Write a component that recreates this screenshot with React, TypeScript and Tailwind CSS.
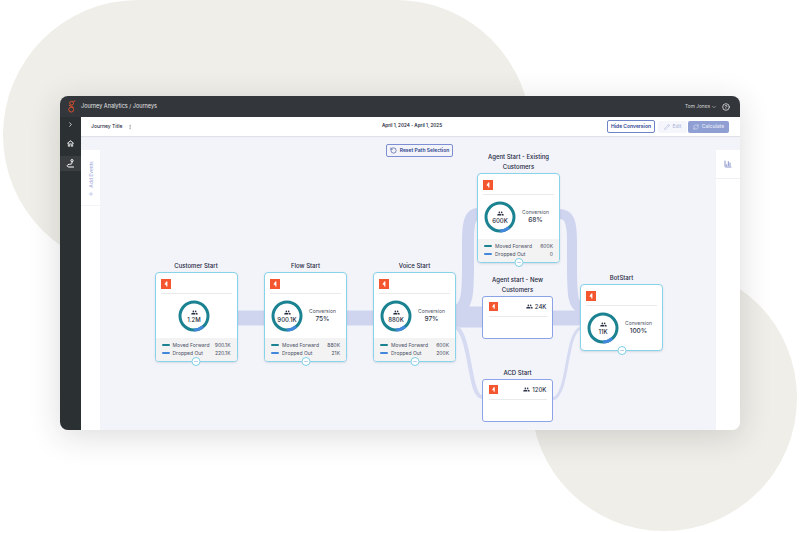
import type { ReactNode } from "react";
import {
  ChartColumn,
  ChevronDown,
  ChevronRight,
  CircleHelp,
  EllipsisVertical,
  Minus,
  Pencil,
  Plus,
  RefreshCw,
  RotateCcw,
} from "lucide-react";
import { MdOutlineHome, MdPeople } from "react-icons/md";

function Logo() {
  return (
    <svg width="9" height="13" viewBox="0 0 9 13" fill="none" stroke="#e8532b" strokeWidth="0.9">
      <circle cx="4.6" cy="3.2" r="1.9" />
      <circle cx="4.2" cy="9.6" r="2.5" />
      <path d="M2 5.2 L6.5 7.4 M6.4 1.4 L8.4 .8" />
    </svg>
  );
}

function JourneyIcon() {
  return (
    <svg width="9" height="9" viewBox="0 0 9 9" fill="none" stroke="white" strokeWidth="1">
      <circle cx="6" cy="1.6" r="1.1" />
      <path d="M6 3 V4.4 C6 5.6 1.2 4.8 1.2 6.6 C1.2 7.8 2.2 8 3 8 H8" />
    </svg>
  );
}

function Badge({ size = 10 }: { size?: number }) {
  return (
    <svg width={size} height={size} viewBox="0 0 10 10" className="block">
      <rect width="10" height="10" fill="#f4572f" />
      <path d="M5.2 2.5 H6.4 V7.5 H5.2 V5.8 H3.6 V5.2 Z" fill="white" />
    </svg>
  );
}

function Donut({ value }: { value: string }) {
  const circ = 2 * Math.PI * 14;
  return (
    <div className="relative flex h-[32px] w-[32px] shrink-0 flex-col items-center justify-center">
      <svg width="32" height="32" viewBox="0 0 32 32" className="absolute inset-0">
        <circle cx="16" cy="16" r="14" fill="none" stroke="#1b8291" strokeWidth="3" />
        <circle
          cx="16"
          cy="16"
          r="14"
          fill="none"
          stroke="#4287dc"
          strokeWidth="3"
          strokeDasharray={`${circ * 0.11} ${circ}`}
          transform="rotate(50 16 16)"
        />
      </svg>
      <MdPeople className="h-[7px] w-[7px] text-[#262b3d]" />
      <span className="text-[6px] font-medium leading-[7px] text-[#262b3d]">{value}</span>
    </div>
  );
}

function Legend({ forward, dropped }: { forward: string; dropped: string }) {
  return (
    <div className="flex flex-col gap-[2px] bg-[#f3f3f4] px-[6px] pb-[5px] pt-[4px] text-[5px] leading-[6px] text-[#4a4f63]">
      <div className="flex items-center">
        <span className="mr-[3px] h-[2px] w-[8px] rounded-full bg-[#1b8291]" />
        <span className="flex-1">Moved Forward</span>
        <span>{forward}</span>
      </div>
      <div className="flex items-center">
        <span className="mr-[3px] h-[2px] w-[8px] rounded-full bg-[#4287dc]" />
        <span className="flex-1">Dropped Out</span>
        <span>{dropped}</span>
      </div>
    </div>
  );
}

function Collapse() {
  return (
    <div className="absolute -bottom-[5px] left-1/2 flex h-[9px] w-[9px] -translate-x-1/2 items-center justify-center rounded-full border border-[#7fd0e6] bg-white">
      <Minus className="h-[5px] w-[5px] text-[#5a80c8]" strokeWidth={2} />
    </div>
  );
}

function Title({ children }: { children: ReactNode }) {
  return (
    <div className="absolute bottom-full left-1/2 mb-[3px] w-[90px] -translate-x-1/2 text-center text-[6px] font-medium leading-[9.5px] text-[#20243a]">
      {children}
    </div>
  );
}

function Conversion({ pct }: { pct: string }) {
  return (
    <div className="flex flex-1 flex-col items-center pl-[2px] text-[#4a4f63]">
      <span className="text-[5px] leading-[7px]">Conversion</span>
      <span className="text-[6.5px] font-medium leading-[9px] text-[#30354a]">{pct}</span>
    </div>
  );
}

function FullNode({
  className,
  title,
  value,
  pct,
  forward,
  dropped,
}: {
  className: string;
  title: ReactNode;
  value: string;
  pct?: string;
  forward?: string;
  dropped?: string;
}) {
  return (
    <div className={`absolute w-[83px] rounded-[4px] border border-[#86d3ea] bg-white shadow-[0_1px_2px_rgba(60,70,110,0.15)] ${className}`}>
      <Title>{title}</Title>
      <div className="overflow-hidden rounded-[3px]">
        <div className="px-[5px] pt-[6px]">
          <Badge />
          <div className="mt-[4px] h-[1px] bg-[#eaeaec]" />
        </div>
        <div className={`flex items-center py-[6px] ${pct ? "px-[6px]" : "justify-center pl-[5px] pr-[9px]"}`}>
          <Donut value={value} />
          {pct && <Conversion pct={pct} />}
        </div>
        {forward && dropped && <Legend forward={forward} dropped={dropped} />}
      </div>
      <Collapse />
    </div>
  );
}

function SmallNode({ className, title, value }: { className: string; title: ReactNode; value: string }) {
  return (
    <div className={`absolute h-[43px] w-[71px] rounded-[3px] border border-[#8ba3e6] bg-white px-[5.5px] pt-[5px] ${className}`}>
      <Title>{title}</Title>
      <div className="flex items-center justify-between">
        <Badge size={9} />
        <div className="flex items-center gap-[2px] text-[6px] font-medium text-[#30354a]">
          <MdPeople className="h-[7px] w-[7px]" />
          {value}
        </div>
      </div>
      <div className="mt-[5px] h-[1px] bg-[#eaeaec]" />
    </div>
  );
}

export default function App() {
  return (
    <div className="relative h-[533px] w-[800px] overflow-hidden bg-white font-['Inter',sans-serif]">
      <div className="absolute left-[3px] top-0 h-[270px] w-[528px] rounded-full bg-[#efeee9]" />
      <div className="absolute left-[531px] top-[265px] h-[266px] w-[266px] rounded-full bg-[#efeee9]" />

      <div className="relative pl-[60px] pt-[96px]">
        <div className="flex h-[334px] w-[680px] flex-col overflow-hidden rounded-[8px] bg-[#f3f4fa] shadow-[0_6px_32px_rgba(40,40,40,0.16)]">
          <header className="flex h-[21px] shrink-0 items-center bg-[#33363b] pl-[7px] pr-[10px] text-white">
            <Logo />
            <span className="ml-[5px] text-[5.5px] text-[#e4e5e6]">Journey Analytics / Journeys</span>
            <div className="ml-auto flex items-center gap-[5px] text-[4.8px] text-[#d8d9da]">
              <span className="flex items-center gap-[1px]">
                Tom Jones <ChevronDown className="h-[6px] w-[6px]" />
              </span>
              <CircleHelp className="h-[8px] w-[8px] text-white" />
            </div>
          </header>

          <div className="flex min-h-0 flex-1">
            <aside className="flex w-[21px] shrink-0 flex-col items-center bg-[#2b3032] text-white">
              <div className="flex h-[14px] items-center">
                <ChevronRight className="h-[7px] w-[7px]" strokeWidth={2.5} />
              </div>
              <div className="flex h-[25px] w-full items-center justify-center">
                <MdOutlineHome className="h-[9px] w-[9px]" />
              </div>
              <div className="flex h-[15px] w-full items-center justify-center bg-[#393d40]">
                <JourneyIcon />
              </div>
            </aside>

            <main className="flex min-w-0 flex-1 flex-col">
              <div className="flex h-[19px] shrink-0 items-center bg-white pl-[10px] pr-[11px] shadow-[0_1px_1px_rgba(60,70,110,0.1)]">
                <span className="w-[36px] text-[5px] font-medium text-[#262b3d]">Journey Title</span>
                <EllipsisVertical className="h-[6px] w-[6px] text-[#888]" />
                <span className="ml-[249px] text-[4.6px] font-semibold text-[#262b3d]">April 1, 2024 - April 1, 2025</span>
                <div className="ml-auto flex items-center">
                  <button className="h-[13px] w-[48px] rounded-[2px] border border-[#6f83c9] text-[5px] font-semibold text-[#2b3f8f]">
                    Hide Conversion
                  </button>
                  <button className="ml-[3px] flex h-[12px] w-[29px] items-center justify-center gap-[3px] rounded-[2px] bg-[#f5f6fb] text-[5px] text-[#a8b2da]">
                    <Pencil className="h-[6px] w-[6px]" /> Edit
                  </button>
                  <button className="ml-[1px] flex h-[12px] w-[41px] items-center justify-center gap-[3px] rounded-[2px] bg-[#8f9fd3] text-[5px] font-medium text-[#e6eaf6]">
                    <RefreshCw className="h-[6px] w-[6px]" /> Calculate
                  </button>
                </div>
              </div>

              <div className="relative min-h-0 flex-1">
                <div className="absolute bottom-0 left-0 top-[14px] w-[19px] bg-white">
                  <div className="flex h-[56px] flex-col items-center border-b border-[#f3f4f9] pt-[11px] text-[#98a5d8]">
                    <span className="rotate-180 text-[5px] leading-[6px] [writing-mode:vertical-rl]">Add Events</span>
                    <Plus className="mt-[3px] h-[6px] w-[6px]" />
                  </div>
                </div>
                <div className="absolute bottom-0 right-0 top-[14px] w-[24px] bg-white">
                  <div className="flex h-[29px] items-center justify-center border-b border-[#eef0f6]">
                    <ChartColumn className="h-[8px] w-[8px] text-[#4b5fb0]" />
                  </div>
                </div>

                <svg className="absolute inset-0" width="659" height="294" viewBox="0 0 659 294" fill="none" stroke="#cfd5ef">
                  <path d="M156 182 H500" strokeWidth="15" />
                  <path d="M375 181 H401" strokeWidth="21" />
                  <path d="M375 176 C386 170 387 160 387 130 V105 C387 85 390 78 397 78" strokeWidth="12" />
                  <path d="M478 78 C488 78 491 85 491 105 V130 C491 160 492 170 500 172" strokeWidth="10" />
                  <path d="M375 191 C390 200 388 261 401 261" strokeWidth="4" stroke="#d6dbf2" />
                  <path d="M472 263 C488 258 484 200 499 192" strokeWidth="3" stroke="#d6dbf2" />
                </svg>

                <button className="absolute left-[305px] top-[8px] flex h-[13px] w-[67px] items-center justify-center gap-[3px] rounded-[2px] border border-[#7d8fd2] bg-[#f3f4fa] text-[5px] font-semibold text-[#2b3f8f]">
                  <RotateCcw className="h-[7px] w-[7px]" /> Reset Path Selection
                </button>

                <FullNode className="left-[73.5px] top-[136px]" title="Customer Start" value="1.2M" forward="900.1K" dropped="220.1K" />
                <FullNode className="left-[183px] top-[136px]" title="Flow Start" value="900.1K" pct="75%" forward="880K" dropped="21K" />
                <FullNode className="left-[292px] top-[136px]" title="Voice Start" value="880K" pct="97%" forward="600K" dropped="200K" />
                <FullNode
                  className="left-[396px] top-[37px]"
                  title={<>Agent Start - Existing<br />Customers</>}
                  value="600K"
                  pct="68%"
                  forward="600K"
                  dropped="0"
                />
                <SmallNode className="left-[401px] top-[160px]" title={<>Agent start - New<br />Customers</>} value="24K" />
                <SmallNode className="left-[401px] top-[243px]" title="ACD Start" value="120K" />
                <FullNode className="left-[499px] top-[148px]" title="BotStart" value="11K" pct="100%" />
              </div>
            </main>
          </div>
        </div>
      </div>
    </div>
  );
}
